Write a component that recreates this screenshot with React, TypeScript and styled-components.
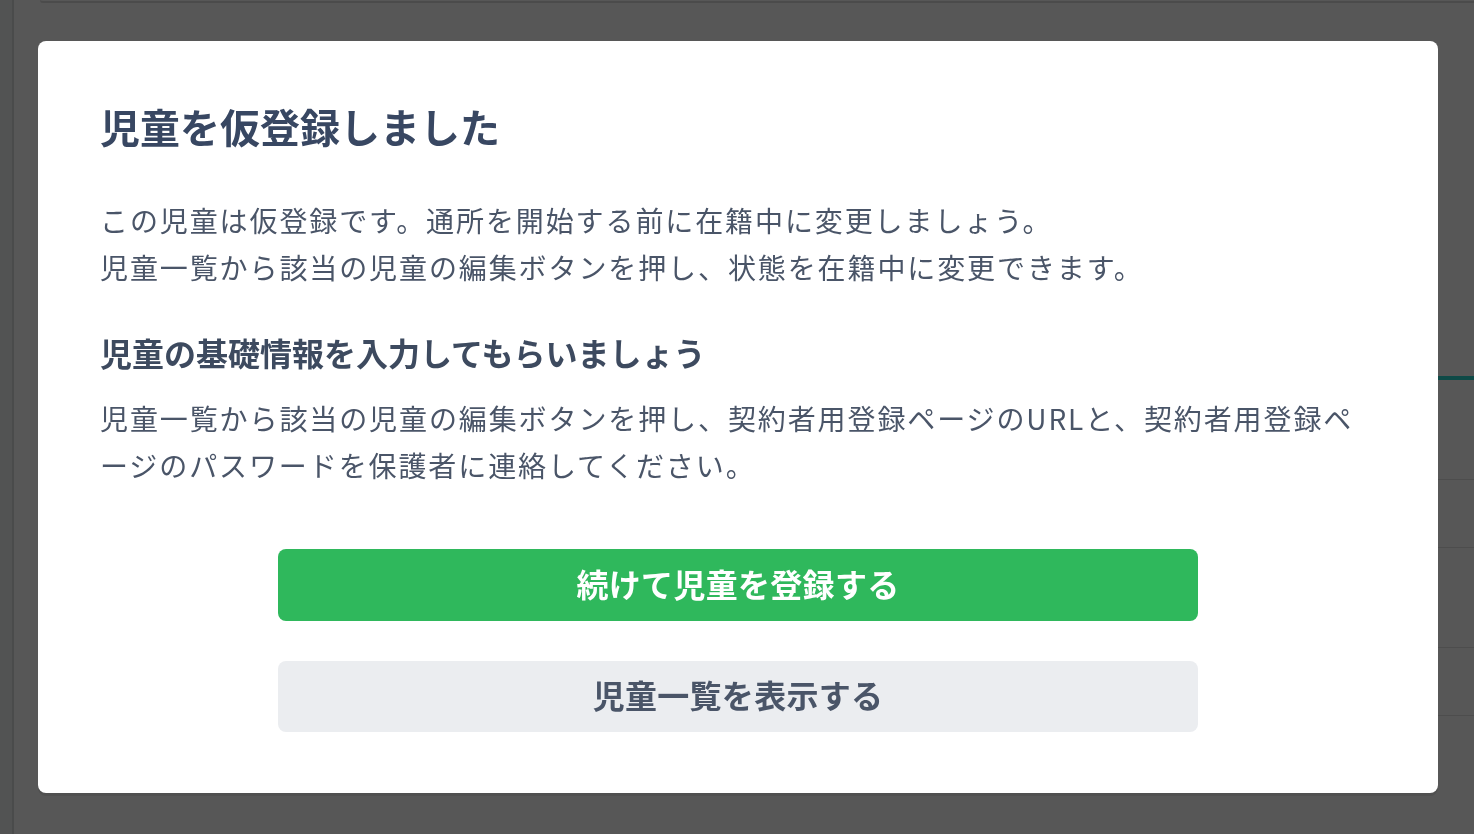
import React from "react";
import styled, { createGlobalStyle } from "styled-components";

const GlobalStyle = createGlobalStyle`
  * { box-sizing: border-box; }
  html, body { margin: 0; padding: 0; }
  body {
    background: #575757;
    font-family: "Noto Sans CJK JP", "Noto Sans", sans-serif;
    overflow: hidden;
  }
`;

const Page = styled.div`
  display: flex;
  width: 100vw;
  height: 100vh;
  background: #575757;
`;

const Sidebar = styled.aside`
  width: 14px;
  flex: none;
  background: #525353;
  border-right: 2px solid #4a4b4b;
`;

const Main = styled.main`
  flex: 1;
  display: flex;
  flex-direction: column;
  padding-left: 26px;
`;

const TopCard = styled.div`
  height: 3px;
  border-bottom: 2px solid #4b4b4b;
  border-bottom-left-radius: 6px;
`;

const TabBar = styled.div`
  margin-top: 373px;
  height: 4px;
  background: #0e4a47;
`;

const Row = styled.div<{ $h: number }>`
  height: ${(p) => p.$h}px;
  border-bottom: 1px solid #4d4d4d;
`;

const Overlay = styled.div`
  position: fixed;
  inset: 0;
  display: flex;
  padding: 41px 36px 41px 38px;
`;

const Modal = styled.section`
  flex: 1;
  display: flex;
  flex-direction: column;
  background: #ffffff;
  border-radius: 8px;
  padding: 57px 62px 61px 62px;
  box-shadow: 0 3px 0 rgba(0, 0, 0, 0.08);
`;

const Title = styled.h2`
  margin: 0;
  font-size: 40px;
  line-height: 56px;
  font-weight: 700;
  color: #384762;
`;

const Body = styled.p<{ $mt: number }>`
  margin: ${(p) => p.$mt}px 0 0;
  max-width: 1268px;
  font-size: 28px;
  line-height: 47px;
  font-weight: 400;
  letter-spacing: 1.9px;
  color: #4a5568;
`;

const SubTitle = styled.h3`
  margin: 37px 0 0;
  font-size: 32px;
  line-height: 48px;
  font-weight: 700;
  color: #3d4a5f;
`;

const Actions = styled.div`
  margin-top: 60px;
  display: flex;
  flex-direction: column;
  align-items: center;
  gap: 40px;
`;

const Button = styled.button<{ $variant: "primary" | "secondary" }>`
  width: 920px;
  height: ${(p) => (p.$variant === "primary" ? 72 : 71)}px;
  padding: 0 0 5px;
  border: none;
  border-radius: 8px;
  font-family: "Noto Sans CJK JP", "Noto Sans", sans-serif;
  font-size: 32px;
  font-weight: 700;
  letter-spacing: 0.3px;
  cursor: pointer;
  background: ${(p) => (p.$variant === "primary" ? "#2fb85c" : "#ebedf0")};
  color: ${(p) => (p.$variant === "primary" ? "#ffffff" : "#4a5568")};
`;

export default function App() {
  return (
    <>
      <GlobalStyle />
      <Page>
        <Sidebar />
        <Main>
          <TopCard />
          <TabBar />
          <Row $h={100} />
          <Row $h={68} />
          <Row $h={100} />
          <Row $h={68} />
        </Main>
      </Page>
      <Overlay>
        <Modal>
          <Title>児童を仮登録しました</Title>
          <Body $mt={43}>
            この児童は仮登録です。通所を開始する前に在籍中に変更しましょう。
            <br />
            児童一覧から該当の児童の編集ボタンを押し、状態を在籍中に変更できます。
          </Body>
          <SubTitle>児童の基礎情報を入力してもらいましょう</SubTitle>
          <Body $mt={19}>
            児童一覧から該当の児童の編集ボタンを押し、契約者用登録ページのURLと、契約者用登録ページのパスワードを保護者に連絡してください。
          </Body>
          <Actions>
            <Button $variant="primary">続けて児童を登録する</Button>
            <Button $variant="secondary">児童一覧を表示する</Button>
          </Actions>
        </Modal>
      </Overlay>
    </>
  );
}
